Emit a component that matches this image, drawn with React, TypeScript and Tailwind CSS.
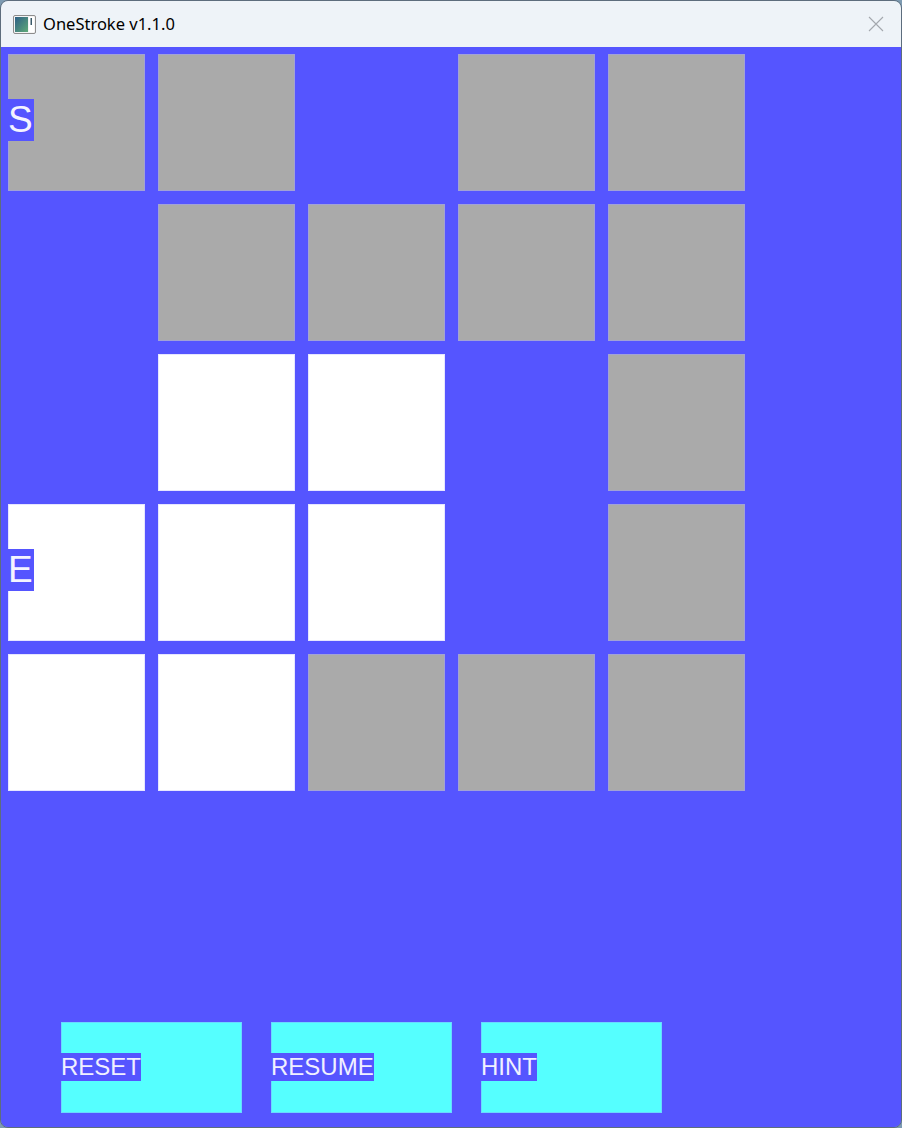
import React from "react";

type Cell = "g" | "w" | "";

const grid: Cell[][] = [
  ["g", "g", "", "g", "g"],
  ["", "g", "g", "g", "g"],
  ["", "w", "w", "", "g"],
  ["w", "w", "w", "", "g"],
  ["w", "w", "g", "g", "g"],
];

const labels: Record<string, string> = { "0-0": "S", "3-0": "E" };

function AppIcon() {
  return (
    <svg width="23" height="19" viewBox="0 0 23 19">
      <defs>
        <linearGradient id="ig" x1="0" y1="0" x2="1" y2="1">
          <stop offset="0" stopColor="#2d5f86" />
          <stop offset="1" stopColor="#5faa78" />
        </linearGradient>
      </defs>
      <rect x="0.5" y="0.5" width="22" height="18" rx="1.5" fill="#f4f4f4" stroke="#8c8c8c" />
      <rect x="2" y="2" width="13" height="15" fill="url(#ig)" />
      <rect x="16" y="2" width="5" height="15" fill="#ffffff" />
      <rect x="17.5" y="3" width="1.5" height="7" fill="#3a5a6a" />
    </svg>
  );
}

export default function App() {
  return (
    <div className="w-[902px] h-[1128px] bg-[#7d9bb2] overflow-hidden">
      <div className="w-[902px] h-[1128px] rounded-[8px] border border-[#5d6d7d] overflow-hidden flex flex-col">
        <div className="h-[46px] bg-[#eef3f8] flex items-center shrink-0">
          <div className="ml-[12px] mt-[1px] flex items-center">
            <AppIcon />
          </div>
          <div
            className="ml-[7px] text-[16.5px] text-black"
            style={{ fontFamily: '"Noto Sans", "Open Sans", sans-serif' }}
          >
            OneStroke v1.1.0
          </div>
          <div className="ml-auto mr-[17px] flex items-center">
            <svg width="16" height="16" viewBox="0 0 16 16">
              <path d="M1 1 L15 15 M15 1 L1 15" stroke="#a4a8ae" strokeWidth="1.1" />
            </svg>
          </div>
        </div>
        <div className="flex-1 bg-[#5555ff] flex flex-col pl-[7px] pt-[7px]">
          <div className="grid grid-cols-[repeat(5,137px)] auto-rows-[137px] gap-[13px]">
            {grid.map((row, r) =>
              row.map((c, ci) => {
                const lab = labels[`${r}-${ci}`];
                const cls =
                  c === "g"
                    ? "bg-[#aaaaaa] border border-[#a2a2d6]"
                    : c === "w"
                    ? "bg-white border border-[#e6e6ff]"
                    : "";
                return (
                  <div key={`${r}-${ci}`} className={`${cls} flex items-center`}>
                    {lab && (
                      <span
                        className="bg-[#5555ff] text-[#f4f4ff] text-[37px] leading-[42px] -ml-[1px] -mt-[5px] pr-[1px]"
                        style={{ fontFamily: '"Liberation Sans", Arial, sans-serif' }}
                      >
                        {lab}
                      </span>
                    )}
                  </div>
                );
              })
            )}
          </div>
          <div className="mt-[231px] ml-[53px] flex gap-[29px]">
            {["RESET", "RESUME", "HINT"].map((t) => (
              <div
                key={t}
                className="w-[181px] h-[91px] bg-[#55ffff] border border-[#6ad8ff] flex items-center"
              >
                <span
                  className="bg-[#5555ff] text-[#f0f0ff] text-[24px] leading-[28px] -ml-[1px] -mt-[2px]"
                  style={{ fontFamily: '"Liberation Sans", Arial, sans-serif' }}
                >
                  {t}
                </span>
              </div>
            ))}
          </div>
        </div>
      </div>
    </div>
  );
}
